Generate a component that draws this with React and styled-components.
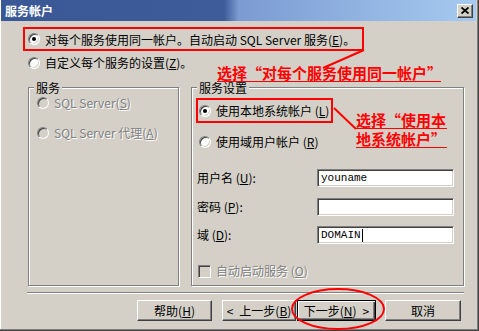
import styled, {createGlobalStyle} from "styled-components";

const GlobalStyle = createGlobalStyle`
  body {
    margin: 0;
    background: #d4d0c8;
    font-family: "Noto Sans CJK SC", "Noto Sans", sans-serif;
    font-size: 12px;
    color: #000;
  }
`;

const Window = styled.div`
  position: relative;
  width: 479px;
  height: 331px;
  box-sizing: border-box;
  padding: 0 2px 2px 1px;
  background: #d4d0c8;
  border-right: 1px solid #404040;
  border-bottom: 1px solid #404040;
  box-shadow: inset -1px -1px 0 #808080, inset 1px 0 0 #fff;
  overflow: hidden;
`;

const TitleBar = styled.div`
  height: 21px;
  display: flex;
  align-items: center;
  justify-content: space-between;
  padding: 0 3px 0 4px;
  background: linear-gradient(to right, #3a5896 0%, #3e5c9a 47%, #7b9bd2 50%, #a6caf0 100%);
  color: #fff;
  font-weight: 700;
  font-size: 12px;
`;

const CloseButton = styled.div`
  width: 16px;
  height: 14px;
  box-sizing: border-box;
  display: flex;
  align-items: center;
  justify-content: center;
  background: #d4d0c8;
  border: 1px solid;
  border-color: #fff #404040 #404040 #fff;
  box-shadow: inset -1px -1px 0 #808080;
`;

const Content = styled.div`
  padding-left: 22px;
`;

const RedBox = styled.div`
  display: flex;
  align-items: center;
  gap: ${(p) => p.$gap || 5}px;
  box-sizing: border-box;
  width: ${(p) => p.$width}px;
  height: ${(p) => p.$height}px;
  margin-top: ${(p) => p.$top || 0}px;
  margin-left: ${(p) => p.$left || 0}px;
  padding-left: ${(p) => p.$pad || 0}px;
  border: 2px solid #ff0000;
`;

const OptionRow = styled.div`
  display: flex;
  align-items: center;
  gap: 5px;
  height: 16px;
  line-height: 16px;
  margin-top: ${(p) => p.$top || 0}px;
  margin-left: ${(p) => p.$left || 0}px;
  white-space: nowrap;
  color: ${(p) => (p.$disabled ? "#808080" : "#000")};
  text-shadow: ${(p) => (p.$disabled ? "1px 1px 0 #fff" : "none")};
`;

const RadioDot = styled.span`
  position: relative;
  flex: none;
  width: 12px;
  height: 12px;
  box-sizing: border-box;
  border-radius: 50%;
  border: 1px solid;
  border-color: #808080 #fff #fff #808080;
  box-shadow: inset 1px 1px 0 #404040, inset -1px -1px 0 #d4d0c8;
  background: ${(p) => (p.$disabled ? "#d4d0c8" : "#fff")};

  &::after {
    content: "";
    display: ${(p) => (p.$checked ? "block" : "none")};
    position: absolute;
    left: 3px;
    top: 3px;
    width: 4px;
    height: 4px;
    border-radius: 50%;
    background: #000;
  }
`;

const CheckBox = styled.span`
  flex: none;
  width: 13px;
  height: 13px;
  box-sizing: border-box;
  border: 1px solid;
  border-color: #808080 #fff #fff #808080;
  box-shadow: inset 1px 1px 0 #404040, inset -1px -1px 0 #d4d0c8;
  background: #d4d0c8;
`;

const Mn = styled.span`
  text-decoration: underline;
  text-underline-offset: 1px;
`;

const GroupRow = styled.div`
  display: flex;
  gap: 12px;
  margin-top: 16px;
  margin-left: 5px;
`;

const Group = styled.div`
  position: relative;
  width: ${(p) => p.$width}px;
  height: 199px;
  box-sizing: border-box;
  border: 1px solid #808080;
  box-shadow: inset 1px 1px 0 #fff, 1px 1px 0 #fff;
  padding: ${(p) => p.$pad};
`;

const Legend = styled.span`
  position: absolute;
  top: -6px;
  left: 5px;
  padding: 0 2px;
  background: #d4d0c8;
  line-height: 12px;
`;

const FieldRow = styled.div`
  display: flex;
  align-items: center;
  height: 18px;
  margin-top: ${(p) => p.$top}px;
`;

const FieldLabel = styled.span`
  width: 120px;
  line-height: 16px;
`;

const TextBox = styled.div`
  width: 137px;
  height: 18px;
  box-sizing: border-box;
  background: #fff;
  border: 1px solid;
  border-color: #808080 #fff #fff #808080;
  box-shadow: inset 1px 1px 0 #404040, inset -1px -1px 0 #d4d0c8;
  padding: 0 3px;
  font-family: "Liberation Mono", monospace;
  font-size: 11px;
  line-height: 16px;
  display: flex;
  align-items: center;
`;

const Caret = styled.span`
  display: inline-block;
  width: 1px;
  height: 13px;
  background: #000;
  margin-left: 1px;
`;

const Separator = styled.div`
  width: 437px;
  margin: 6px 0 0 4px;
  border-top: 1px solid #808080;
  border-bottom: 1px solid #fff;
`;

const ButtonRow = styled.div`
  display: flex;
  margin: 6px 0 0 114px;
`;

const Button = styled.div`
  width: ${(p) => p.$width}px;
  height: 21px;
  box-sizing: border-box;
  margin-right: ${(p) => p.$gap || 0}px;
  display: flex;
  align-items: center;
  justify-content: center;
  gap: 6px;
  background: #d4d0c8;
  border: 1px solid;
  border-color: ${(p) => (p.$default ? "#000" : "#fff #404040 #404040 #fff")};
  box-shadow: ${(p) =>
    p.$default
      ? "inset 1px 1px 0 #fff, inset -1px -1px 0 #404040, inset -2px -2px 0 #808080"
      : "inset -1px -1px 0 #808080"};
  line-height: 16px;
  white-space: nowrap;
`;

const Note = styled.div`
  position: absolute;
  left: ${(p) => p.$left}px;
  top: ${(p) => p.$top}px;
  width: ${(p) => p.$width}px;
  color: #ff0000;
  font-weight: 700;
  font-size: 15px;
  line-height: ${(p) => p.$lh || 17}px;
  white-space: nowrap;
`;

const NoteLine = styled.div`
  border-bottom: 1px solid #ff0000;
  margin-bottom: ${(p) => p.$gap || 0}px;
`;

const Overlay = styled.svg`
  position: absolute;
  left: 0;
  top: 0;
  pointer-events: none;
`;

const Radio = ({checked, disabled, children, ...rest}) => (
  <OptionRow $disabled={disabled} {...rest}>
    <RadioDot $checked={checked} $disabled={disabled} />
    <span>{children}</span>
  </OptionRow>
);

export default function App() {
  return (
    <>
      <GlobalStyle />
      <Window lang="zh-CN">
        <TitleBar>
          <span>服务帐户</span>
          <CloseButton>
            <svg width="8" height="7" viewBox="0 0 8 7">
              <path d="M0.5 0.5 L7.5 6.5 M7.5 0.5 L0.5 6.5" stroke="#000" strokeWidth="1.8" />
            </svg>
          </CloseButton>
        </TitleBar>
        <Content>
          <RedBox $width={341} $height={24} $top={6} $pad={3}>
            <RadioDot $checked />
            <span>
              对每个服务使用同一帐户。自动启动 SQL Server 服务(<Mn>E</Mn>)。
            </span>
          </RedBox>
          <Radio $top={4} $left={5}>
            自定义每个服务的设置(<Mn>Z</Mn>)。
          </Radio>
          <GroupRow>
            <Group $width={151} $pad="7px 0 0 8px">
              <Legend>服务</Legend>
              <Radio disabled>
                SQL Server(<Mn>S</Mn>)
              </Radio>
              <Radio disabled $top={14}>
                SQL Server 代理(<Mn>A</Mn>)
              </Radio>
            </Group>
            <Group $width={273} $pad="10px 0 0 5px">
              <Legend>服务设置</Legend>
              <RedBox $width={137} $height={25} $left={-1} $pad={1} $gap={5}>
                <RadioDot $checked />
                <span>
                  使用本地系统帐户 (<Mn>L</Mn>)
                </span>
              </RedBox>
              <Radio $top={11} $left={2}>
                使用域用户帐户 (<Mn>R</Mn>)
              </Radio>
              <FieldRow $top={19}>
                <FieldLabel>
                  用户名 (<Mn>U</Mn>):
                </FieldLabel>
                <TextBox>youname</TextBox>
              </FieldRow>
              <FieldRow $top={11}>
                <FieldLabel>
                  密码 (<Mn>P</Mn>):
                </FieldLabel>
                <TextBox />
              </FieldRow>
              <FieldRow $top={10}>
                <FieldLabel>
                  域 (<Mn>D</Mn>):
                </FieldLabel>
                <TextBox>
                  DOMAIN
                  <Caret />
                </TextBox>
              </FieldRow>
              <OptionRow $disabled $top={19} $left={1}>
                <CheckBox />
                <span>
                  自动启动服务 (<Mn>O</Mn>)
                </span>
              </OptionRow>
            </Group>
          </GroupRow>
          <Separator />
          <ButtonRow>
            <Button $width={75} $gap={10}>
              <span>
                帮助(<Mn>H</Mn>)
              </span>
            </Button>
            <Button $width={74} $gap={1}>
              <span>&lt;</span>
              <span>
                上一步(<Mn>B</Mn>)
              </span>
            </Button>
            <Button $width={79} $gap={9} $default>
              <span>
                下一步(<Mn>N</Mn>)
              </span>
              <span>&gt;</span>
            </Button>
            <Button $width={76}>
              <span>取消</span>
            </Button>
          </ButtonRow>
        </Content>

        <Note $left={217} $top={65} $width={224} $lh={16}>
          <NoteLine>选择“对每个服务使用同一帐户”</NoteLine>
        </Note>
        <Note $left={356} $top={111} $width={91}>
          <NoteLine $gap={1}>选择“使用本</NoteLine>
          <NoteLine>地系统帐户”</NoteLine>
        </Note>
        <Overlay width="479" height="331">
          <line x1="364" y1="50" x2="323" y2="68" stroke="#ff0000" strokeWidth="2" />
          <line x1="334" y1="108" x2="356" y2="129" stroke="#ff0000" strokeWidth="2" />
          <ellipse cx="338" cy="309" rx="46" ry="20" fill="none" stroke="#ff0000" strokeWidth="2" />
        </Overlay>
      </Window>
    </>
  );
}
